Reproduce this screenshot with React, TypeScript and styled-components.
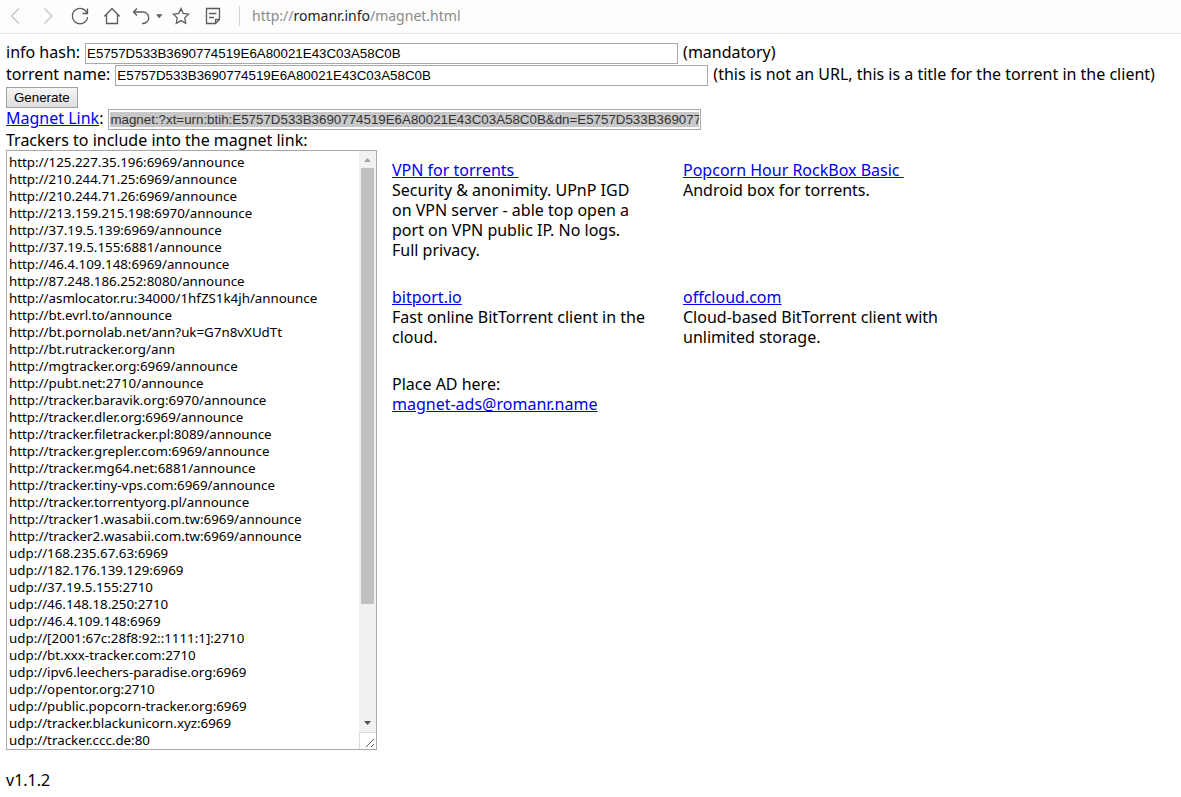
import React, { useState } from "react";
import styled, { createGlobalStyle } from "styled-components";

const GlobalStyle = createGlobalStyle`
  body {
    margin: 0;
    background: #fff;
    color: #000;
    font-family: "Noto Sans", "Open Sans", sans-serif;
    font-size: 16px;
    line-height: 20px;
  }
`;

const Toolbar = styled.header`
  display: flex;
  align-items: center;
  height: 31px;
  padding-bottom: 2px;
  border-bottom: 1px solid #e4e4e4;
  background: #fdfdfd;
`;

const ToolButton = styled.button<{ $wide?: boolean }>`
  flex: none;
  display: flex;
  align-items: center;
  justify-content: center;
  width: ${(p) => (p.$wide ? 37 : 32)}px;
  height: 31px;
  padding: 0;
  border: 0;
  background: none;
  color: #5c5c5c;

  &:disabled {
    color: #c4c4c4;
  }
`;

const Icon = styled.svg`
  display: block;
  fill: none;
  stroke: currentColor;
  stroke-width: 1.3;
`;

const Address = styled.div`
  margin-left: 10px;
  padding-left: 12px;
  border-left: 1px solid #d4d4d4;
  color: #8a8a8a;
  font-size: 14px;
  white-space: nowrap;
`;

const Host = styled.span`
  color: #222;
`;

const Page = styled.main`
  padding: 8px 6px;
`;

const Row = styled.div`
  display: flex;
  align-items: flex-start;
  gap: 5px;
  height: 22px;
  white-space: nowrap;
`;

const Link = styled.a`
  color: #0000ee;
  text-decoration: underline;
  white-space: pre-wrap;
`;

const Field = styled.input<{ $marked?: boolean }>`
  box-sizing: border-box;
  width: 593px;
  height: 21px;
  margin: 1px 0 0;
  padding: 2px 1px;
  border: 1px solid #a9a9a9;
  border-radius: 0;
  font-family: "Liberation Sans", Arial, sans-serif;
  line-height: 15px;
  outline: 0;
  color: ${(p) => (p.$marked ? "#323232" : "#000")};
  background: ${(p) => (p.$marked ? "#c8c8c8" : "#fff")};
  background-clip: content-box;
`;

const Generate = styled.button`
  height: 21px;
  margin: 1px 0 0;
  padding: 0 7px;
  border: 1px solid #a0a0a0;
  border-radius: 0;
  background: linear-gradient(#f6f6f6, #dedede);
  color: #000;
  font-family: "Liberation Sans", Arial, sans-serif;
  line-height: 15px;
`;

const Heading = styled.label`
  display: block;
`;

const Columns = styled.div`
  display: flex;
  align-items: flex-start;
  gap: 15px;
`;

const TrackerBox = styled.div`
  box-sizing: border-box;
  flex: none;
  display: flex;
  width: 371px;
  height: 600px;
  border: 1px solid #a9a9a9;
`;

const TrackerList = styled.textarea`
  flex: 1;
  min-width: 0;
  padding: 3px 2px 0;
  border: 0;
  outline: 0;
  resize: none;
  overflow: hidden;
  white-space: pre;
  background: #fff;
  color: #000;
  font-family: "Noto Sans", "Open Sans", sans-serif;
  line-height: 17px;
`;

const ScrollBar = styled.div`
  display: flex;
  flex-direction: column;
  width: 17px;
  background: #f1f1f1;
`;

const Arrow = styled.svg`
  display: block;
  flex: none;
  width: 17px;
  height: 17px;
`;

const Track = styled.div`
  flex: 1;
  padding: 0 2px;
`;

const Thumb = styled.div`
  height: 436px;
  background: #c1c1c1;
`;

const Grip = styled.svg`
  display: block;
  flex: none;
  width: 17px;
  height: 17px;
  background: #fff;
`;

const Ads = styled.div`
  display: grid;
  grid-template-columns: 256px 256px;
  gap: 27px 35px;
  padding-top: 10px;
`;

const Ad = styled.div``;

const Version = styled.footer`
  margin-top: 20px;
`;

const HASH = "E5757D533B3690774519E6A80021E43C03A58C0B";

const TRACKERS = [
  "http://125.227.35.196:6969/announce",
  "http://210.244.71.25:6969/announce",
  "http://210.244.71.26:6969/announce",
  "http://213.159.215.198:6970/announce",
  "http://37.19.5.139:6969/announce",
  "http://37.19.5.155:6881/announce",
  "http://46.4.109.148:6969/announce",
  "http://87.248.186.252:8080/announce",
  "http://asmlocator.ru:34000/1hfZS1k4jh/announce",
  "http://bt.evrl.to/announce",
  "http://bt.pornolab.net/ann?uk=G7n8vXUdTt",
  "http://bt.rutracker.org/ann",
  "http://mgtracker.org:6969/announce",
  "http://pubt.net:2710/announce",
  "http://tracker.baravik.org:6970/announce",
  "http://tracker.dler.org:6969/announce",
  "http://tracker.filetracker.pl:8089/announce",
  "http://tracker.grepler.com:6969/announce",
  "http://tracker.mg64.net:6881/announce",
  "http://tracker.tiny-vps.com:6969/announce",
  "http://tracker.torrentyorg.pl/announce",
  "http://tracker1.wasabii.com.tw:6969/announce",
  "http://tracker2.wasabii.com.tw:6969/announce",
  "udp://168.235.67.63:6969",
  "udp://182.176.139.129:6969",
  "udp://37.19.5.155:2710",
  "udp://46.148.18.250:2710",
  "udp://46.4.109.148:6969",
  "udp://[2001:67c:28f8:92::1111:1]:2710",
  "udp://bt.xxx-tracker.com:2710",
  "udp://ipv6.leechers-paradise.org:6969",
  "udp://opentor.org:2710",
  "udp://public.popcorn-tracker.org:6969",
  "udp://tracker.blackunicorn.xyz:6969",
  "udp://tracker.ccc.de:80",
].join("\n");

const ADS = [
  {
    link: "VPN for torrents ",
    text: "Security & anonimity. UPnP IGD on VPN server - able top open a port on VPN public IP. No logs. Full privacy.",
  },
  { link: "Popcorn Hour RockBox Basic ", text: "Android box for torrents." },
  { link: "bitport.io", text: "Fast online BitTorrent client in the cloud." },
  { link: "offcloud.com", text: "Cloud-based BitTorrent client with unlimited storage." },
];

export default function App() {
  const [hash, setHash] = useState(HASH);
  const [name, setName] = useState(HASH);
  const [trackers, setTrackers] = useState(TRACKERS);
  const magnet = `magnet:?xt=urn:btih:${hash}&dn=${name}`;

  return (
    <>
      <GlobalStyle />
      <Toolbar>
        <ToolButton disabled aria-label="Back">
          <Icon width="20" height="20" viewBox="0 0 20 20">
            <path d="M13 2.5 5.5 10 13 17.5" />
          </Icon>
        </ToolButton>
        <ToolButton disabled aria-label="Forward">
          <Icon width="20" height="20" viewBox="0 0 20 20">
            <path d="M6.5 2.5 14 10 6.5 17.5" />
          </Icon>
        </ToolButton>
        <ToolButton aria-label="Reload">
          <Icon width="20" height="20" viewBox="0 0 20 20">
            <path d="M17.2 7.5A7.6 7.6 0 1 0 17.6 11M17.5 2.5V7.5H12.5" />
          </Icon>
        </ToolButton>
        <ToolButton aria-label="Home">
          <Icon width="20" height="20" viewBox="0 0 20 20">
            <path d="M2.3 10.5 10 2.5 17.7 10.5M4.5 8.8V17.5H15.5V8.8" />
          </Icon>
        </ToolButton>
        <ToolButton $wide aria-label="Undo">
          <Icon width="32" height="20" viewBox="0 0 32 20">
            <path d="M6 2.5 2.5 6 6 9.5M2.5 6H12a5.6 5.6 0 0 1 0 11.5H11" />
            <path d="M25.5 8.5H31L28.2 12Z" fill="currentColor" strokeWidth="0.5" />
          </Icon>
        </ToolButton>
        <ToolButton aria-label="Favourites">
          <Icon width="20" height="20" viewBox="0 0 20 20">
            <path d="M10 2.6 12.3 7.5 17.6 8.2 13.7 11.9 14.7 17.2 10 14.6 5.3 17.2 6.3 11.9 2.4 8.2 7.7 7.5Z" />
          </Icon>
        </ToolButton>
        <ToolButton aria-label="Notes">
          <Icon width="20" height="20" viewBox="0 0 20 20">
            <path d="M3.5 2.5H16.5V13.5L12.5 17.5H3.5ZM16.5 13.5H12.5V17.5M6 7.5H13.5M6 11.5H11" />
          </Icon>
        </ToolButton>
        <Address>
          http://<Host>romanr.info</Host>/magnet.html
        </Address>
      </Toolbar>

      <Page>
        <Row>
          <label htmlFor="hash">info hash:</label>
          <Field id="hash" value={hash} onChange={(e) => setHash(e.target.value)} />
          <span>(mandatory)</span>
        </Row>
        <Row>
          <label htmlFor="name">torrent name:</label>
          <Field id="name" value={name} onChange={(e) => setName(e.target.value)} />
          <span>(this is not an URL, this is a title for the torrent in the client)</span>
        </Row>
        <Row>
          <Generate type="button">Generate</Generate>
        </Row>
        <Row>
          <span>
            <Link href={magnet}>Magnet Link</Link>:
          </span>
          <Field $marked readOnly aria-label="Magnet Link" value={magnet} />
        </Row>
        <Heading htmlFor="trackers">Trackers to include into the magnet link:</Heading>
        <Columns>
          <TrackerBox>
            <TrackerList
              id="trackers"
              spellCheck={false}
              value={trackers}
              onChange={(e) => setTrackers(e.target.value)}
            />
            <ScrollBar aria-hidden="true">
              <Arrow viewBox="0 0 17 17">
                <path d="M5 11H12L8.5 7Z" fill="#a3a3a3" />
              </Arrow>
              <Track>
                <Thumb />
              </Track>
              <Arrow viewBox="0 0 17 17">
                <path d="M5 6H12L8.5 10Z" fill="#505050" />
              </Arrow>
              <Grip viewBox="0 0 17 17">
                <path d="M0 .5H17M.5 0V17" stroke="#dcdcdc" />
                <path d="M7 15 15 7M12 15 15 12" stroke="#606060" fill="none" />
              </Grip>
            </ScrollBar>
          </TrackerBox>
          <Ads>
            {ADS.map((ad) => (
              <Ad key={ad.link}>
                <Link href="#">{ad.link}</Link>
                <br />
                {ad.text}
              </Ad>
            ))}
            <Ad>
              Place AD here:
              <br />
              <Link href="mailto:magnet-ads@romanr.name">magnet-ads@romanr.name</Link>
            </Ad>
          </Ads>
        </Columns>
        <Version>v1.1.2</Version>
      </Page>
    </>
  );
}
